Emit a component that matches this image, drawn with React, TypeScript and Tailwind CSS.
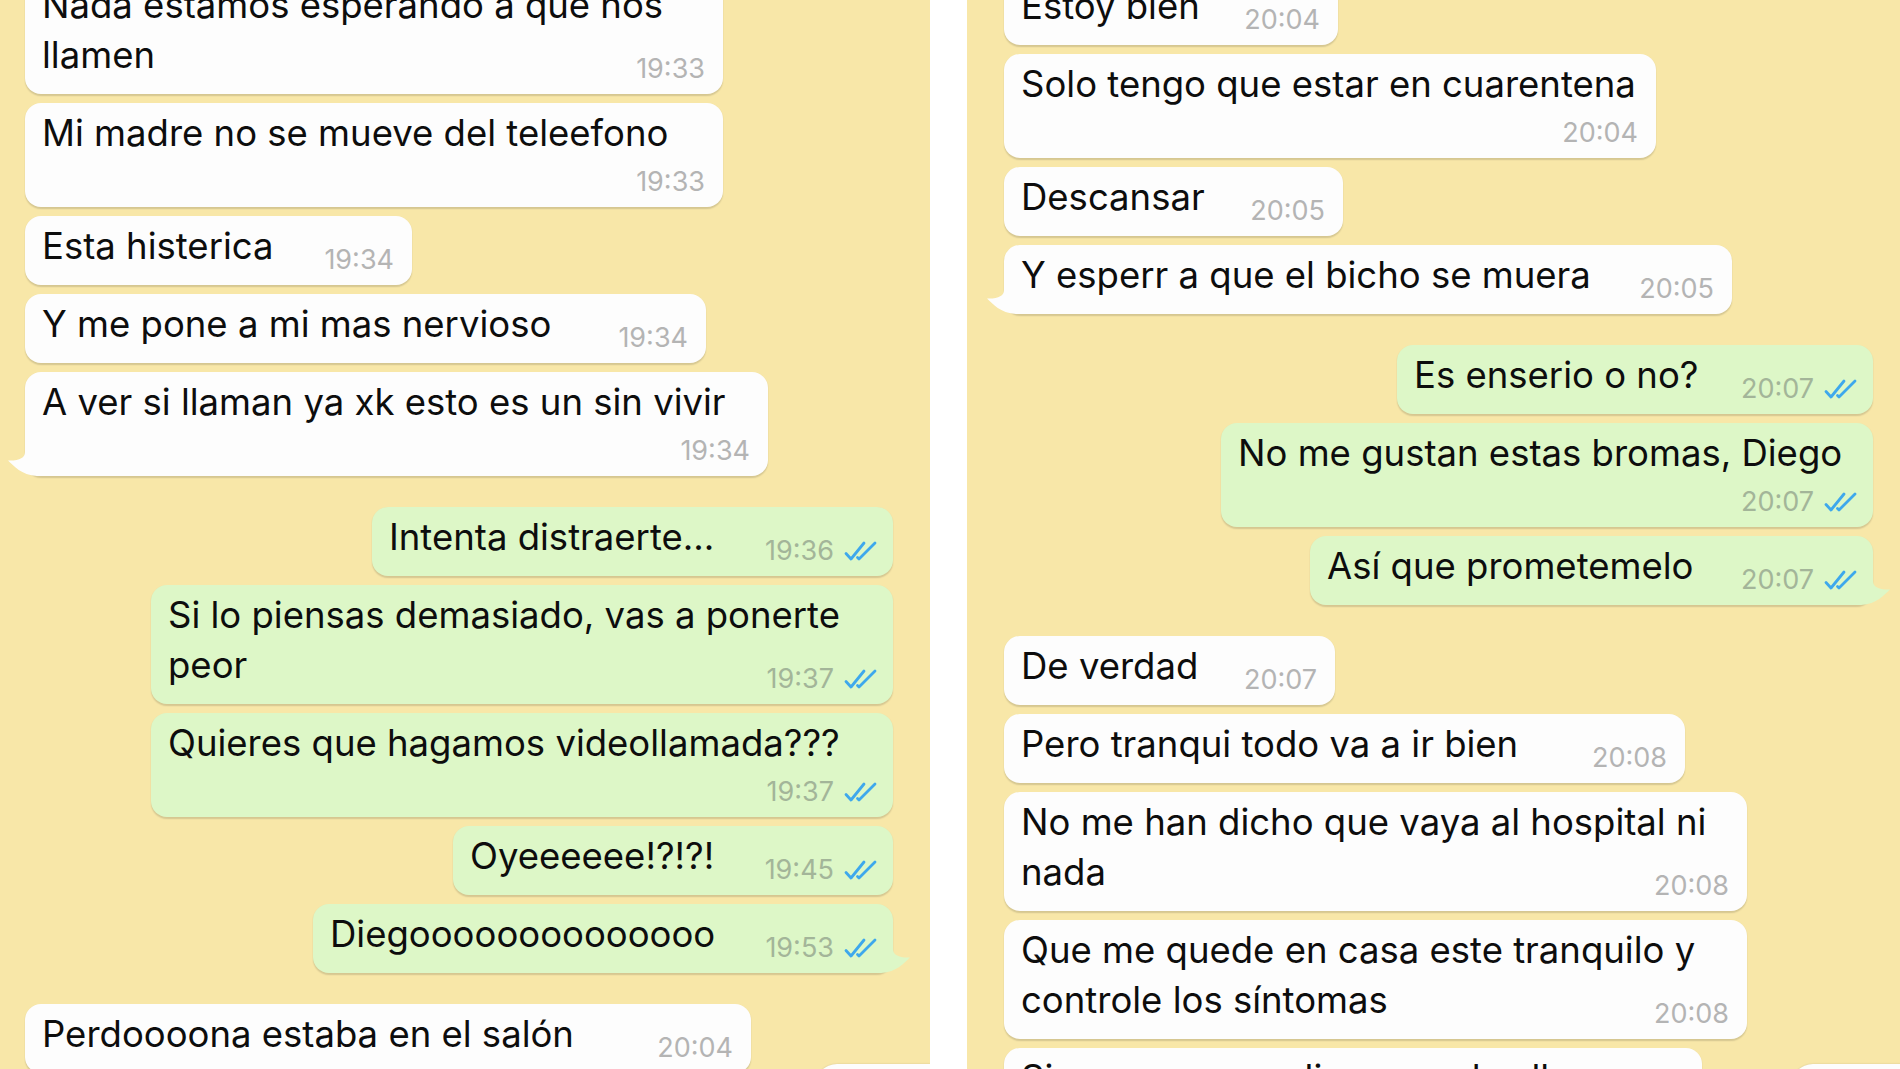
import React from "react";

type Msg = {
  out?: boolean;
  w: string;
  lines: string[];
  time: string;
  mode: "inline" | "below";
  tail?: boolean;
  mt: string;
};

const left: Msg[] = [
  { w: "w-[698px]", lines: ["Nada estamos esperando a que nos", "llamen"], time: "19:33", mode: "inline", mt: "mt-[-25px]" },
  { w: "w-[698px]", lines: ["Mi madre no se mueve del teleefono"], time: "19:33", mode: "below", mt: "mt-[9px]" },
  { w: "w-[387px]", lines: ["Esta histerica"], time: "19:34", mode: "inline", mt: "mt-[9px]" },
  { w: "w-[681px]", lines: ["Y me pone a mi mas nervioso"], time: "19:34", mode: "inline", mt: "mt-[9px]" },
  { w: "w-[743px]", lines: ["A ver si llaman ya xk esto es un sin vivir"], time: "19:34", mode: "below", tail: true, mt: "mt-[9px]" },
  { out: true, w: "w-[521px]", lines: ["Intenta distraerte..."], time: "19:36", mode: "inline", mt: "mt-[31px]" },
  { out: true, w: "w-[742px]", lines: ["Si lo piensas demasiado, vas a ponerte", "peor"], time: "19:37", mode: "inline", mt: "mt-[9px]" },
  { out: true, w: "w-[742px]", lines: ["Quieres que hagamos videollamada???"], time: "19:37", mode: "below", mt: "mt-[9px]" },
  { out: true, w: "w-[440px]", lines: ["Oyeeeeee!?!?!"], time: "19:45", mode: "inline", mt: "mt-[9px]" },
  { out: true, w: "w-[580px]", lines: ["Diegoooooooooooooo"], time: "19:53", mode: "inline", tail: true, mt: "mt-[9px]" },
  { w: "w-[726px]", lines: ["Perdoooona estaba en el salón"], time: "20:04", mode: "inline", mt: "mt-[31px]" },
];

const right: Msg[] = [
  { w: "w-[334px]", lines: ["Estoy bien"], time: "20:04", mode: "inline", mt: "mt-[-24px]" },
  { w: "w-[652px]", lines: ["Solo tengo que estar en cuarentena"], time: "20:04", mode: "below", mt: "mt-[9px]" },
  { w: "w-[339px]", lines: ["Descansar"], time: "20:05", mode: "inline", mt: "mt-[9px]" },
  { w: "w-[728px]", lines: ["Y esperr a que el bicho se muera"], time: "20:05", mode: "inline", tail: true, mt: "mt-[9px]" },
  { out: true, w: "w-[476px]", lines: ["Es enserio o no?"], time: "20:07", mode: "inline", mt: "mt-[31px]" },
  { out: true, w: "w-[652px]", lines: ["No me gustan estas bromas, Diego"], time: "20:07", mode: "below", mt: "mt-[9px]" },
  { out: true, w: "w-[563px]", lines: ["Así que prometemelo"], time: "20:07", mode: "inline", tail: true, mt: "mt-[9px]" },
  { w: "w-[331px]", lines: ["De verdad"], time: "20:07", mode: "inline", mt: "mt-[31px]" },
  { w: "w-[681px]", lines: ["Pero tranqui todo va a ir bien"], time: "20:08", mode: "inline", mt: "mt-[9px]" },
  { w: "w-[743px]", lines: ["No me han dicho que vaya al hospital ni", "nada"], time: "20:08", mode: "inline", mt: "mt-[9px]" },
  { w: "w-[743px]", lines: ["Que me quede en casa este tranquilo y", "controle los síntomas"], time: "20:08", mode: "inline", mt: "mt-[9px]" },
  { w: "w-[698px]", lines: ["Si empeoro me dicen que les llame"], time: "20:09", mode: "inline", mt: "mt-[9px]" },
];

const Checks = () => (
  <svg width="34" height="20" viewBox="0 0 34 20" fill="none" stroke="#3ea8ec" strokeWidth="2.8" strokeLinecap="round" strokeLinejoin="round">
    <path d="M2 12.5 L7 18 L20 2" />
    <path d="M13.5 16.5 L15 18 L31 2" />
  </svg>
);

const TailIn = ({ color }: { color: string }) => (
  <svg className="absolute bottom-0 left-[-18px]" width="40" height="34" viewBox="0 0 40 34">
    <path d="M18 0 L18 10 C18 16 12 19 1 18.5 C7 24 14 33 30 34 L40 34 L40 0 Z" fill={color} />
  </svg>
);

const TailOut = ({ color }: { color: string }) => (
  <svg className="absolute bottom-0 right-[-18px]" width="40" height="34" viewBox="0 0 40 34">
    <path d="M22 0 L22 10 C22 16 28 19 39 18.5 C33 24 26 33 10 34 L0 34 L0 0 Z" fill={color} />
  </svg>
);

function Time({ m }: { m: Msg }) {
  return (
    <div className={`flex items-center gap-[10px] whitespace-nowrap text-[27px] leading-[34px] ${m.out ? "text-[#a3b599]" : "text-[#b4b4b4]"}`}>
      <span>{m.time}</span>
      {m.out && <Checks />}
    </div>
  );
}

function Bubble({ m }: { m: Msg }) {
  const bg = m.out ? "bg-[#ddf7c7]" : "bg-[#fdfdfd]";
  const color = m.out ? "#ddf7c7" : "#fdfdfd";
  const head = m.lines.slice(0, -1);
  const last = m.lines[m.lines.length - 1];
  return (
    <div
      className={`relative ${m.w} ${m.mt} ${m.out ? "self-end pr-[15px]" : "self-start pr-[18px]"} ${bg} rounded-[16px] pl-[17px] pt-[5px] pb-[14px] shadow-[0_1.5px_1.5px_rgba(0,0,0,0.14)]`}
    >
      {m.tail && (m.out ? <TailOut color={color} /> : <TailIn color={color} />)}
      {m.mode === "inline" ? (
        <div className="relative text-[36.5px] leading-[50px] text-[#0d0d0d]">
          {head.map((l, i) => (
            <div key={i} className="whitespace-nowrap">{l}</div>
          ))}
          <div className="flex items-end justify-between">
            <div className="whitespace-nowrap">{last}</div>
            <div className="mb-[-6px] ml-[20px]">
              <Time m={m} />
            </div>
          </div>
        </div>
      ) : (
        <div className="relative">
          <div className="text-[36.5px] leading-[50px] text-[#0d0d0d] whitespace-nowrap">{m.lines[0]}</div>
          <div className="mt-[7px] mb-[-6px] flex justify-end">
            <Time m={m} />
          </div>
        </div>
      )}
    </div>
  );
}

export default function App() {
  return (
    <div className="flex h-[1069px] w-[1900px] overflow-hidden bg-white font-['Inter',sans-serif]">
      <div className="relative w-[930px] shrink-0 overflow-hidden bg-[#f8e7a8]">
        <div className="flex flex-col pl-[25px] pr-[37px]">
          {left.map((m, i) => (
            <Bubble key={i} m={m} />
          ))}
        </div>
        <div className="absolute left-[815px] top-[1064px] h-[80px] w-[140px] rounded-[22px] bg-[#fdfdfd] shadow-[0_0_2px_rgba(0,0,0,0.15)]" />
      </div>
      <div className="w-[37px] shrink-0 bg-white" />
      <div className="relative flex-1 overflow-hidden bg-[#f8e7a8]">
        <div className="flex flex-col pl-[37px] pr-[27px]">
          {right.map((m, i) => (
            <Bubble key={i} m={m} />
          ))}
        </div>
        <div className="absolute left-[824px] top-[1064px] h-[80px] w-[140px] rounded-[22px] bg-[#fdfdfd] shadow-[0_0_2px_rgba(0,0,0,0.15)]" />
      </div>
    </div>
  );
}
